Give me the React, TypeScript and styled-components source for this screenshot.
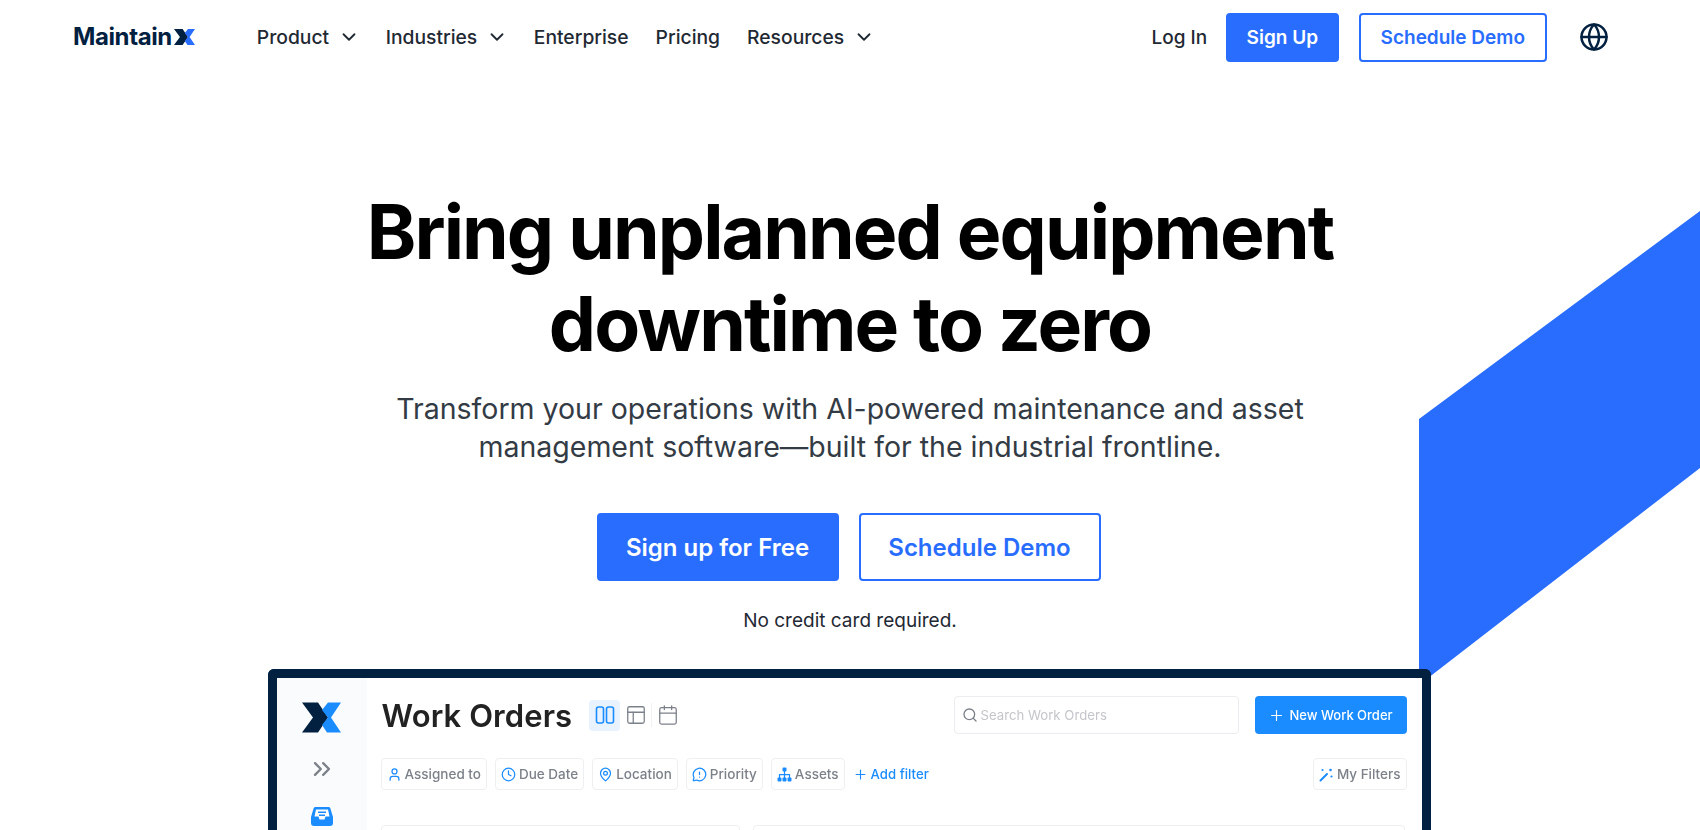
import { createGlobalStyle, styled } from 'styled-components';
import {
  Calendar,
  ChevronDown,
  ChevronsRight,
  Clock,
  Globe,
  MapPin,
  MessageCircleWarning,
  PanelsTopLeft,
  Plus,
  Search,
  User,
} from 'lucide-react';

const BLUE = '#296dff';
const NAVY = '#02203f';
const APP_BLUE = '#1a8cff';

const GlobalStyle = createGlobalStyle`
  html, body {
    margin: 0;
    padding: 0;
    background: #fff;
  }
  * {
    box-sizing: border-box;
  }
  body {
    font-family: Inter, "Liberation Sans", sans-serif;
  }
`;

const Page = styled.div`
  position: relative;
  display: flex;
  flex-direction: column;
  width: 100%;
  height: 830px;
  overflow: hidden;
  background: #fff;
`;

const Ribbon = styled.div`
  position: absolute;
  left: 1419px;
  top: 211px;
  width: 281px;
  height: 480px;
  background: ${BLUE};
  clip-path: polygon(0 208px, 100% 0, 100% 257px, 0 474px);
`;

const Nav = styled.header`
  position: relative;
  display: flex;
  align-items: center;
  height: 74px;
  padding: 0 91px 0 73px;
`;

const LogoWrap = styled.div`
  display: flex;
  align-items: center;
  gap: 2px;
  margin-right: 62px;
`;

const LogoText = styled.span`
  font-size: 24px;
  line-height: 24px;
  font-weight: 700;
  letter-spacing: -0.4px;
  color: ${NAVY};
`;

const NavLinks = styled.nav`
  display: flex;
  align-items: center;
  gap: 27px;
  flex: 1;
`;

const NavLink = styled.a`
  display: flex;
  align-items: center;
  gap: 9px;
  font-size: 19.3px;
  font-weight: 500;
  color: #1f2933;

  svg {
    margin-right: -1.5px;
  }
`;

const NavActions = styled.div`
  display: flex;
  align-items: center;
`;

const LogIn = styled.a`
  margin-right: 19px;
  font-size: 19px;
  font-weight: 500;
  color: #1f2933;
`;

const NavButton = styled.a<{ $outline?: boolean }>`
  display: flex;
  align-items: center;
  justify-content: center;
  height: 49px;
  padding: 0 ${(p) => (p.$outline ? 20 : 18.5)}px;
  margin-right: 20px;
  border: 2px solid ${BLUE};
  border-radius: 4px;
  font-size: 19px;
  font-weight: 600;
  color: ${(p) => (p.$outline ? BLUE : '#fff')};
  background: ${(p) => (p.$outline ? '#fff' : BLUE)};
`;

const GlobeIcon = styled(Globe)`
  margin-left: 12px;
  color: ${NAVY};
`;

const Hero = styled.main`
  position: relative;
  display: flex;
  flex-direction: column;
  align-items: center;
  flex: 1;
  min-height: 0;
`;

const Title = styled.h1`
  margin: 112px 0 0;
  font-size: 75px;
  line-height: 92px;
  font-weight: 700;
  letter-spacing: -1.9px;
  text-align: center;
  color: #000;
`;

const Lead = styled.p`
  margin: 20px 0 0;
  font-size: 28.5px;
  line-height: 38px;
  font-weight: 400;
  text-align: center;
  color: #333b45;
`;

const CtaRow = styled.div`
  display: flex;
  gap: 20px;
  margin: 47px 3px 0 0;
`;

const CtaButton = styled.a<{ $outline?: boolean }>`
  display: flex;
  align-items: center;
  justify-content: center;
  width: 242px;
  height: 68px;
  border: 2px solid ${BLUE};
  border-radius: 4px;
  font-size: 24px;
  font-weight: 600;
  color: ${(p) => (p.$outline ? BLUE : '#fff')};
  background: ${(p) => (p.$outline ? '#fff' : BLUE)};
`;

const Note = styled.p`
  margin: 28px 0 0;
  font-size: 19px;
  line-height: 24px;
  color: #1f2933;
`;

const AppFrame = styled.section`
  display: flex;
  flex-shrink: 0;
  width: 1163px;
  height: 200px;
  margin: 36px 2px 0 0;
  border: 9px solid ${NAVY};
  border-bottom: none;
  border-radius: 6px 6px 0 0;
  background: #fff;
  overflow: hidden;
  filter: blur(0.35px);
`;

const Sidebar = styled.aside`
  display: flex;
  flex-direction: column;
  align-items: center;
  flex-shrink: 0;
  width: 90px;
  padding-top: 24px;
  background: #fafbfc;
`;

const Expand = styled(ChevronsRight)`
  margin-top: 22px;
  color: #7c8189;
`;

const InboxMark = styled.svg`
  margin-top: 23px;
`;

const AppMain = styled.div`
  display: flex;
  flex-direction: column;
  flex: 1;
  padding: 18px 15px 0 14px;
`;

const AppHeader = styled.div`
  display: flex;
  align-items: center;
  height: 38px;
`;

const AppTitle = styled.h2`
  margin: 0 17px 0 1px;
  font-size: 31px;
  font-weight: 600;
  letter-spacing: 0.1px;
  color: #222;
`;

const ViewActive = styled.span`
  display: flex;
  align-items: center;
  justify-content: center;
  width: 31px;
  height: 31px;
  border-radius: 4px;
  color: ${APP_BLUE};
  background: #e8f3ff;
`;

const ViewIcon = styled.span`
  display: flex;
  align-items: center;
  justify-content: center;
  width: 31px;
  height: 31px;
  color: #7c8189;
`;

const ViewDivider = styled.span`
  width: 1px;
  height: 24px;
  background: #f0f1f3;
`;

const SearchBox = styled.div`
  display: flex;
  align-items: center;
  gap: 3px;
  width: 285px;
  height: 38px;
  margin-left: auto;
  padding-left: 7px;
  border: 1px solid #ecedf0;
  border-radius: 4px;
  font-size: 13.2px;
  color: #c4c6cb;
`;

const SearchGlyph = styled(Search)`
  color: #7c8189;
`;

const NewButton = styled.div`
  display: flex;
  align-items: center;
  justify-content: center;
  gap: 4px;
  width: 152px;
  height: 38px;
  margin-left: 16px;
  border-radius: 4px;
  font-size: 13px;
  font-weight: 500;
  color: #fff;
  background: ${APP_BLUE};
`;

const FilterRow = styled.div`
  display: flex;
  align-items: center;
  gap: 8px;
  margin-top: 24px;
`;

const Chip = styled.div<{ $right?: boolean }>`
  display: flex;
  align-items: center;
  gap: 3px;
  height: 32px;
  padding: 0 5px;
  margin-left: ${(p) => (p.$right ? 'auto' : '0')};
  border: 1px solid #eeeff1;
  border-radius: 4px;
  font-size: 13.5px;
  font-weight: 500;
  color: #7c8189;

  svg {
    flex-shrink: 0;
    color: ${APP_BLUE};
  }
`;

const AddFilter = styled.div`
  display: flex;
  align-items: center;
  gap: 3px;
  font-size: 13.2px;
  font-weight: 500;
  color: ${APP_BLUE};
`;

const CardRow = styled.div`
  display: flex;
  gap: 13px;
  margin-top: 35px;
`;

const Card = styled.div<{ $wide?: boolean }>`
  width: ${(p) => (p.$wide ? 652 : 359)}px;
  height: 60px;
  border: 1px solid #eeeff1;
  border-radius: 4px;
`;

function XMark({ width, height, navy, blue }: { width: number; height: number; navy: string; blue: string }) {
  return (
    <svg width={width} height={height} viewBox='0 0 39 30'>
      <polygon fill={navy} points='0,0 16,0 26,15 16,30 0,30 11,15' />
      <polygon fill={blue} points='26,0 39,0 29,15 39,30 25,30 20,22.5 26,15 20,7.5' />
    </svg>
  );
}

function SplitColumnsIcon() {
  return (
    <svg width={20} height={20} viewBox='0 0 20 20' fill='none' stroke='currentColor' strokeWidth={1.6}>
      <rect x={1.5} y={2} width={7} height={16} rx={2} />
      <rect x={11.5} y={2} width={7} height={16} rx={2} />
    </svg>
  );
}

function AssetsIcon() {
  return (
    <svg width={15} height={15} viewBox='0 0 15 15' fill='currentColor'>
      <rect x={5.5} y={0.5} width={4} height={4} rx={1} />
      <rect x={0.5} y={10.5} width={4} height={4} rx={1} />
      <rect x={5.5} y={10.5} width={4} height={4} rx={1} />
      <rect x={10.5} y={10.5} width={4} height={4} rx={1} />
      <path d='M7.5 4v7M2.5 11V7.7h10V11' fill='none' stroke='currentColor' strokeWidth={1.2} />
    </svg>
  );
}

function FiltersWandIcon() {
  return (
    <svg width={15} height={15} viewBox='0 0 15 15' fill='currentColor'>
      <path d='M1.500 13.500 8 7' fill='none' stroke='currentColor' strokeWidth={2} strokeLinecap='round' />
      <circle cx={11.500} cy={3} r={1.300} />
      <circle cx={3.500} cy={3} r={1.100} />
      <circle cx={12.500} cy={9.500} r={1.100} />
    </svg>
  );
}

function App() {
  return (
    <Page>
      <GlobalStyle />
      <Ribbon />
      <Nav>
        <LogoWrap>
          <LogoText>Maintain</LogoText>
          <XMark width={21} height={18} navy={NAVY} blue={BLUE} />
        </LogoWrap>
        <NavLinks>
          <NavLink>
            Product <ChevronDown size={22} />
          </NavLink>
          <NavLink>
            Industries <ChevronDown size={22} />
          </NavLink>
          <NavLink>Enterprise</NavLink>
          <NavLink>Pricing</NavLink>
          <NavLink>
            Resources <ChevronDown size={22} />
          </NavLink>
        </NavLinks>
        <NavActions>
          <LogIn>Log In</LogIn>
          <NavButton>Sign Up</NavButton>
          <NavButton $outline>Schedule Demo</NavButton>
          <GlobeIcon size={30} strokeWidth={2} />
        </NavActions>
      </Nav>
      <Hero>
        <Title>
          Bring unplanned equipment
          <br />
          downtime to zero
        </Title>
        <Lead>
          Transform your operations with AI-powered maintenance and asset
          <br />
          management software—built for the industrial frontline.
        </Lead>
        <CtaRow>
          <CtaButton>Sign up for Free</CtaButton>
          <CtaButton $outline>Schedule Demo</CtaButton>
        </CtaRow>
        <Note>No credit card required.</Note>
        <AppFrame>
          <Sidebar>
            <XMark width={39} height={31} navy={NAVY} blue={APP_BLUE} />
            <Expand size={28} strokeWidth={2} />
            <InboxMark width={22} height={20} viewBox='0 0 22 20'>
              <path
                fill={APP_BLUE}
                d='M4.5 1h13a2 2 0 0 1 1.9 1.4L22 11v6a3 3 0 0 1-3 3H3a3 3 0 0 1-3-3v-6l2.6-8.6A2 2 0 0 1 4.500 1z'
              />
              <path fill='#fff' d='M5 3.500h12l1.500 7h-4l-1 3h-5l-1-3h-4z' />
              <path fill={APP_BLUE} d='M7 5.500h8v1.500H7zM8 8.500h6V10H8z' />
            </InboxMark>
          </Sidebar>
          <AppMain>
            <AppHeader>
              <AppTitle>Work Orders</AppTitle>
              <ViewActive>
                <SplitColumnsIcon />
              </ViewActive>
              <ViewIcon>
                <PanelsTopLeft size={22} strokeWidth={1.4} />
              </ViewIcon>
              <ViewDivider />
              <ViewIcon>
                <Calendar size={22} strokeWidth={1.4} />
              </ViewIcon>
              <SearchBox>
                <SearchGlyph size={16} />
                Search Work Orders
              </SearchBox>
              <NewButton>
                <Plus size={17} strokeWidth={1.6} />
                New Work Order
              </NewButton>
            </AppHeader>
            <FilterRow>
              <Chip>
                <User size={15} />
                Assigned to
              </Chip>
              <Chip>
                <Clock size={15} />
                Due Date
              </Chip>
              <Chip>
                <MapPin size={15} />
                Location
              </Chip>
              <Chip>
                <MessageCircleWarning size={15} />
                Priority
              </Chip>
              <Chip>
                <AssetsIcon />
                Assets
              </Chip>
              <AddFilter>
                <Plus size={15} strokeWidth={1.8} />
                Add filter
              </AddFilter>
              <Chip $right>
                <FiltersWandIcon />
                My Filters
              </Chip>
            </FilterRow>
            <CardRow>
              <Card />
              <Card $wide />
            </CardRow>
          </AppMain>
        </AppFrame>
      </Hero>
    </Page>
  );
}

export default App;
